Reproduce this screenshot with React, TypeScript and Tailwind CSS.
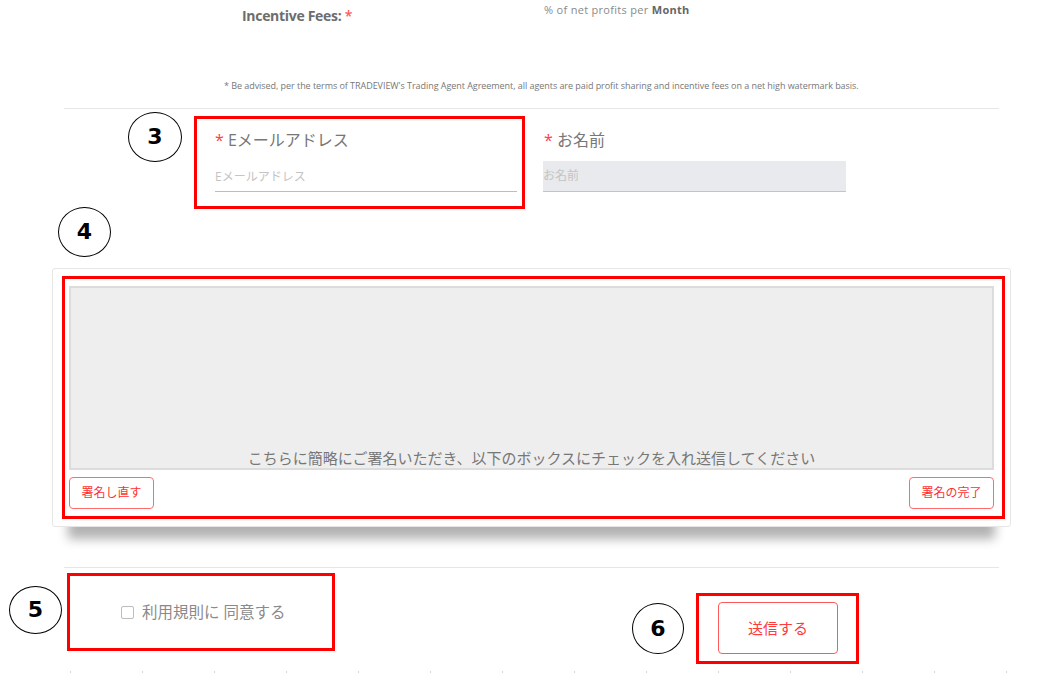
import React from "react";

const FONT = { fontFamily: '"Open Sans", "Noto Sans CJK JP", sans-serif' };

function Circle({ n, className }: { n: string; className: string }) {
  return (
    <div
      className={`flex shrink-0 items-center justify-center rounded-[50%] border-[1.5px] border-black text-[22px] font-bold leading-none text-black ${className}`}
      style={{ fontFamily: '"DejaVu Sans", "Open Sans", sans-serif' }}
    >
      {n}
    </div>
  );
}

export default function App() {
  const ticks = Array.from({ length: 14 });
  return (
    <div className="relative h-[674px] w-[1047px] overflow-hidden bg-white" style={FONT}>
      {/* top section */}
      <div className="ml-[64px] h-[109px] w-[935px] border-b border-[#e6e6e6]">
        <div className="flex pl-[178px]">
          <div className="w-[302px] pt-[7px] text-[14px] font-bold leading-[18px] tracking-[-0.3px] text-[#6d6d6d]">
            Incentive Fees: <span className="font-semibold text-[#ff5a5a]">*</span>
          </div>
          <div className="pt-[3px] text-[11px] leading-[14px] tracking-[0.3px] text-[#8a8a8a]">
            % of net profits per <span className="font-bold text-[#666]">Month</span>
          </div>
        </div>
        <div className="mt-[55px] pl-[160px] text-[9px] leading-[12px] tracking-[-0.05px] text-[#777]">
          * Be advised, per the terms of TRADEVIEW's Trading Agent Agreement, all agents are paid profit sharing and
          incentive fees on a net high watermark basis.
        </div>
      </div>

      {/* row 3 */}
      <div className="flex h-[98px] items-start">
        <Circle n="3" className="ml-[128px] mt-[3px] h-[50px] w-[54px]" />
        <div className="ml-[12px] mt-[7px] h-[93px] w-[331px] shrink-0 border-[3px] border-[#ff0000] pl-[18px] pt-[11px]">
          <div className="text-[16px] leading-[20px] text-[#777]">
            <span className="text-[#ff4040]">*</span> Eメールアドレス
          </div>
          <div className="mt-[12px] flex h-[30px] w-[302px] items-center border-b border-[#bdbdbd] text-[12px] text-[#c4c4c4]">
            Eメールアドレス
          </div>
        </div>
        <div className="ml-[19px] mt-[21px]">
          <div className="text-[16px] leading-[20px] text-[#777]">
            <span className="text-[#ff4040]">*</span> お名前
          </div>
          <div className="-ml-[1px] mt-[11px] flex h-[31px] w-[303px] items-center border-b border-[#c4c4c4] bg-[#e8eaed] text-[12px] text-[#c4c4c4]">
            お名前
          </div>
        </div>
      </div>

      {/* row 4 */}
      <Circle n="4" className="ml-[58px] h-[50px] w-[53px]" />
      <div className="ml-[52px] mt-[11px] h-[259px] w-[959px] rounded-[3px] border border-[#e6e6e6] pl-[9px] pt-[7px] shadow-[0_28px_10px_-16px_rgba(0,0,0,0.3)]">
        <div className="h-[243px] w-[943px] border-[3px] border-[#ff0000] pl-[4px] pt-[7px]">
          <div className="flex h-[184px] w-[925px] items-end justify-center border-2 border-[#dcdcdc] bg-[#eeeeee] text-[15px] leading-[20px] text-[#777]">
            こちらに簡略にご署名いただき、以下のボックスにチェックを入れ送信してください
          </div>
          <div className="mt-[7px] flex w-[925px] justify-between">
            <button className="flex h-[32px] w-[85px] items-center justify-center rounded-[4px] border border-[#ff6b6b] bg-white text-[12px] text-[#ff3030]">
              署名し直す
            </button>
            <button className="flex h-[32px] w-[85px] items-center justify-center rounded-[4px] border border-[#ff6b6b] bg-white text-[12px] text-[#ff3030]">
              署名の完了
            </button>
          </div>
        </div>
      </div>

      <div className="ml-[64px] mt-[40px] w-[935px] border-t border-[#e6e6e6]" />

      {/* row 5 / 6 */}
      <div className="flex h-[96px] items-start">
        <Circle n="5" className="ml-[9px] mt-[18px] h-[48px] w-[53px]" />
        <div className="ml-[5px] mt-[5px] flex h-[78px] w-[268px] shrink-0 items-center border-[3px] border-[#ff0000] pl-[51px]">
          <div className="h-[13px] w-[13px] rounded-[2px] border border-[#bdbdbd] bg-white" />
          <span className="ml-[8px] text-[15.5px] leading-[20px] text-[#8a8a8a]">利用規則に 同意する</span>
        </div>
        <Circle n="6" className="ml-[297px] mt-[35px] h-[51px] w-[52px]" />
        <div className="ml-[12px] mt-[25px] h-[71px] w-[163px] shrink-0 border-[3px] border-[#ff0000] pl-[19px] pt-[6px]">
          <button className="flex h-[52px] w-[120px] items-center justify-center rounded-[4px] border border-[#ff5a5a] bg-white text-[15px] text-[#ff3b3b]">
            送信する
          </button>
        </div>
      </div>

      <div className="mt-[7px] flex gap-[71px] pl-[70px]">
        {ticks.map((_, i) => (
          <div key={i} className="h-[2px] w-[1px] bg-[#d8d8d8]" />
        ))}
      </div>
    </div>
  );
}
